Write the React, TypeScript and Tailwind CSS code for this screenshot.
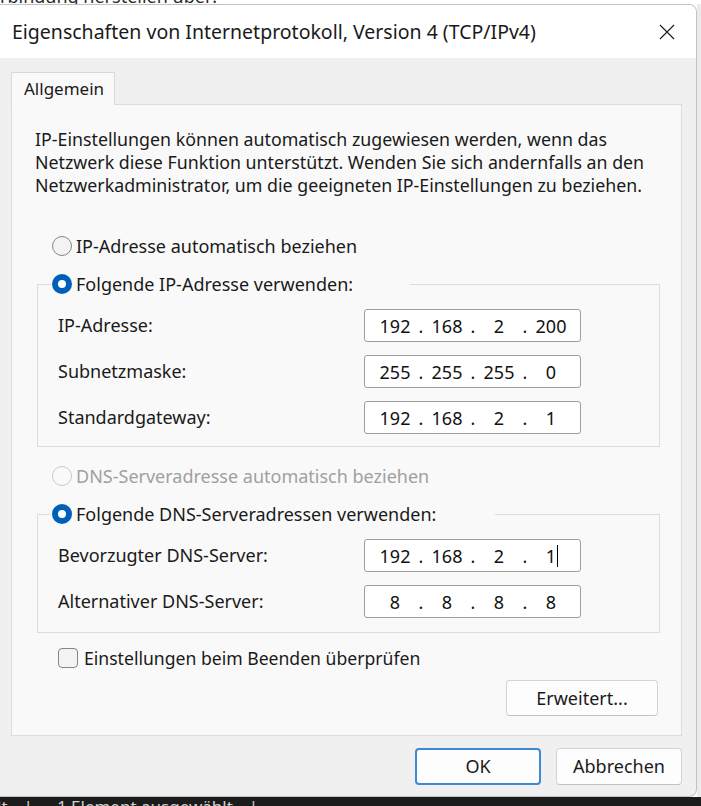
import React from 'react';

// Windows 11 "Eigenschaften von Internetprotokoll, Version 4" dialog, light theme.

type RadioState = 'off' | 'on' | 'disabled';

const Radio: React.FC<{ state: RadioState }> = ({ state }) => {
  if (state === 'on') {
    return (
      <span className="flex h-5 w-5 shrink-0 items-center justify-center rounded-full bg-[#005fb8]">
        <span className="h-2 w-2 rounded-full bg-white" />
      </span>
    );
  }
  return (
    <span
      className={
        state === 'disabled'
          ? 'h-5 w-5 shrink-0 rounded-full border border-[#c9c9c9] bg-[#f9f9f9]'
          : 'h-5 w-5 shrink-0 rounded-full border border-[#858585] bg-[#f3f3f3]'
      }
    />
  );
};

const IpField: React.FC<{ parts: string[]; caret?: boolean }> = ({ parts, caret }) => (
  <div className="flex h-[33px] w-[217px] items-center rounded-[3px] border border-[#9d9d9d] bg-white pl-[8px] leading-[24px] text-[#111]">
    {parts.map((p, i) => (
      <React.Fragment key={i}>
        {i > 0 && <span className="w-[8px] text-center">.</span>}
        <span className="relative w-[44px] text-center">
          {p}
          {caret && i === parts.length - 1 && (
            <span className="absolute top-[1px] ml-[1px] h-[22px] w-px bg-black" />
          )}
        </span>
      </React.Fragment>
    ))}
  </div>
);

const FieldRow: React.FC<{ label: string; parts: string[]; caret?: boolean }> = ({ label, parts, caret }) => (
  <div className="flex h-[33px] items-center">
    <span className="w-[306px]">{label}</span>
    <IpField parts={parts} caret={caret} />
  </div>
);

const App: React.FC = () => {
  return (
    <div className="flex h-[806px] w-[701px] flex-col overflow-hidden bg-white font-['Noto_Sans',sans-serif] text-[18px] text-[#1a1a1a]">
      {/* window behind, only its last pixels show */}
      <div className="h-[4px] overflow-hidden bg-white">
        <div className="-mt-[13px] whitespace-nowrap leading-[18px] text-[#2b2b2b]">rbindung herstellen über:</div>
      </div>

      <div className="flex h-[793px]">
        <div className="flex w-[697px] flex-col overflow-hidden rounded-r-[8px] border-t border-r border-b border-[#c2c2c2] bg-[#f0f0f0]">
          {/* title bar */}
          <div className="flex h-[53px] shrink-0 items-center justify-between bg-white pl-[12px] pr-[21px]">
            <span className="text-[19.5px] leading-none">Eigenschaften von Internetprotokoll, Version 4 (TCP/IPv4)</span>
            <svg width="16" height="16" viewBox="0 0 16 16" className="mt-[1px]">
              <path d="M1 1L15 15M15 1L1 15" stroke="#1a1a1a" strokeWidth="1.1" fill="none" />
            </svg>
          </div>

          {/* body */}
          <div className="flex flex-1 flex-col pl-[11px] pr-[14px] pt-[14px]">
            <div className="relative z-10 -mb-px flex h-[33px] w-[104px] items-center border-t border-l border-r border-[#d9d9d9] bg-[#f9f9f9] pl-[12px] text-[17px]">
              Allgemein
            </div>

            <div className="flex h-[632px] w-[671px] flex-col border border-[#dcdcdc] bg-[#f9f9f9]">
              <p className="ml-[23px] mt-[23px] text-[17.8px] leading-[23px]">
                IP-Einstellungen können automatisch zugewiesen werden, wenn das
                <br />
                Netzwerk diese Funktion unterstützt. Wenden Sie sich andernfalls an den
                <br />
                Netzwerkadministrator, um die geeigneten IP-Einstellungen zu beziehen.
              </p>

              <div className="ml-[40px] mt-[37px] flex h-6 items-center gap-[4px]">
                <Radio state="off" />
                <span>IP-Adresse automatisch beziehen</span>
              </div>

              <fieldset className="ml-[25px] mt-[14px] w-[623px] border border-[#dcdcdc] pb-[12px] pt-[13px]">
                <legend className="ml-[13px] flex h-6 w-[359px] items-center gap-[4px] pl-[1px]">
                  <Radio state="on" />
                  <span>Folgende IP-Adresse verwenden:</span>
                </legend>
                <div className="flex flex-col gap-[13px] pl-[20px]">
                  <FieldRow label="IP-Adresse:" parts={['192', '168', '2', '200']} />
                  <FieldRow label="Subnetzmaske:" parts={['255', '255', '255', '0']} />
                  <FieldRow label="Standardgateway:" parts={['192', '168', '2', '1']} />
                </div>
              </fieldset>

              <div className="ml-[40px] mt-[17px] flex h-6 items-center gap-[4px] text-[#a0a0a0]">
                <Radio state="disabled" />
                <span>DNS-Serveradresse automatisch beziehen</span>
              </div>

              <fieldset className="ml-[25px] mt-[14px] w-[623px] border border-[#dcdcdc] pb-[14px] pt-[13px]">
                <legend className="ml-[13px] flex h-6 w-[444px] items-center gap-[4px] pl-[1px]">
                  <Radio state="on" />
                  <span>Folgende DNS-Serveradressen verwenden:</span>
                </legend>
                <div className="flex flex-col gap-[13px] pl-[20px]">
                  <FieldRow label="Bevorzugter DNS-Server:" parts={['192', '168', '2', '1']} caret />
                  <FieldRow label="Alternativer DNS-Server:" parts={['8', '8', '8', '8']} />
                </div>
              </fieldset>

              <div className="ml-[46px] mt-[13px] flex h-6 items-center gap-[6px]">
                <span className="h-5 w-5 shrink-0 rounded-[4px] border border-[#858585] bg-[#f3f3f3]" />
                <span className="text-[17.6px]">Einstellungen beim Beenden überprüfen</span>
              </div>

              <button
                type="button"
                className="mr-[23px] mt-[10px] h-[36px] w-[152px] self-end rounded-[4px] border border-[#d3d3d3] border-b-[#c2c2c2] bg-[#fdfdfd]"
              >
                Erweitert...
              </button>
            </div>

            <div className="mt-[12px] flex justify-end gap-[15px]">
              <button
                type="button"
                className="h-[37px] w-[126px] rounded-[4px] border-2 border-[#3f88d6] bg-[#fdfdfd]"
              >
                OK
              </button>
              <button
                type="button"
                className="h-[37px] w-[126px] rounded-[4px] border border-[#d3d3d3] border-b-[#c2c2c2] bg-[#fdfdfd]"
              >
                Abbrechen
              </button>
            </div>
          </div>
        </div>
        <div className="flex-1 bg-[#ebebeb]" />
      </div>

      {/* explorer status bar behind the dialog */}
      <div className="h-[9px] overflow-hidden bg-[#1c1c1c] pt-[1px]">
        <div className="-ml-[3px] flex whitespace-nowrap text-[17px] leading-[18px] text-[#cfcfcf]">
          <span>lt</span>
          <span className="ml-[16px]">|</span>
          <span className="ml-[24px]">1 Element ausgewählt</span>
          <span className="ml-[16px]">|</span>
        </div>
      </div>
    </div>
  );
};

export default App;
